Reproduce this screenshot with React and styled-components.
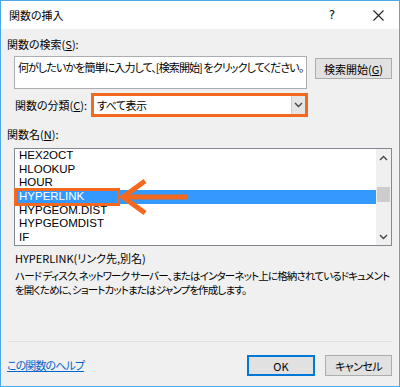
import React from 'react';
import styled, { createGlobalStyle } from 'styled-components';

const GlobalStyle = createGlobalStyle`
  html, body {
    margin: 0;
    padding: 0;
    background: #ffffff;
  }
  * {
    box-sizing: border-box;
  }
`

const ORANGE = '#f4691f';

const Window = styled.div`
  width: 400px;
  height: 387px;
  border: 1px solid #4ea7e6;
  display: flex;
  flex-direction: column;
  font-family: "Noto Sans CJK JP", "Noto Sans", sans-serif;
  font-feature-settings: "palt";
  font-size: 11px;
  color: #000;
  overflow: hidden;
`

const TitleBar = styled.div`
  height: 28px;
  flex: 0 0 28px;
  background: #ffffff;
  display: flex;
  align-items: center;
  padding-left: 8px;
`

const Title = styled.div`
  flex: 1;
  font-size: 11px;
  line-height: 16px;
`

const HelpGlyph = styled.div`
  width: 20px;
  text-align: center;
  font-family: "DejaVu Sans", sans-serif;
  font-size: 12px;
  margin-right: 21px;
`

const CloseBox = styled.div`
  width: 30px;
  display: flex;
  justify-content: center;
  margin-right: 6px;
`

const Body = styled.div`
  flex: 1;
  background: #f0f0f0;
  display: flex;
  flex-direction: column;
  padding: 7px 7px 10px 6px;
`

const Label = styled.div`
  height: 16px;
  line-height: 16px;
  margin-top: ${p => p.$top || 0}px;
  white-space: nowrap;
`

const SearchRow = styled.div`
  display: flex;
  margin-top: 4px;
  margin-left: 7px;
  gap: 8px;
`

const SearchBox = styled.div`
  width: 293px;
  height: 33px;
  background: #fff;
  border: 1px solid #abadb3;
  padding: 2px 3px;
  line-height: 16px;
  letter-spacing: -0.9px;
  white-space: nowrap;
  overflow: hidden;
`

const Button = styled.div`
  width: ${p => p.$w}px;
  height: 21px;
  margin-top: ${p => p.$top || 0}px;
  background: #e1e1e1;
  border: 1px solid ${p => (p.$primary ? '#0078d7' : '#adadad')};
  box-shadow: ${p => (p.$primary ? 'inset 0 0 0 1px #0078d7' : 'none')};
  display: flex;
  align-items: center;
  justify-content: center;
  line-height: 16px;
  letter-spacing: ${p => p.$spacing || 0}px;
  white-space: nowrap;
`

const CategoryRow = styled.div`
  display: flex;
  align-items: center;
  margin-top: 4px;
  padding-left: 8px;
`

const CategoryLabel = styled.div`
  width: 76px;
  line-height: 16px;
  white-space: nowrap;
`

const Select = styled.div`
  width: 217px;
  height: 24px;
  background: #fff;
  border: 3px solid ${ORANGE};
  display: flex;
  align-items: stretch;
`

const SelectValue = styled.div`
  flex: 1;
  padding-left: 3px;
  line-height: 18px;
  letter-spacing: -0.5px;
`

const DropButton = styled.div`
  width: 14px;
  background: #e5e5e5;
  border-left: 1px solid #d0d0d0;
  display: flex;
  align-items: center;
  justify-content: center;
`

const ListWrap = styled.div`
  position: relative;
  margin-top: 6px;
  margin-left: 7px;
  width: 378px;
  height: 98px;
`

const ListBox = styled.div`
  width: 100%;
  height: 100%;
  background: #fff;
  border: 1px solid #828790;
  display: flex;
  overflow: hidden;
`

const Items = styled.div`
  flex: 1;
`

const Item = styled.div`
  height: 13.7px;
  line-height: 13.7px;
  padding-left: 4px;
  font-family: "Liberation Sans", Arial, sans-serif;
  font-size: 11.5px;
  background: ${p => (p.$selected ? '#3399ff' : 'transparent')};
  color: ${p => (p.$selected ? '#fff' : '#000')};
  white-space: nowrap;
`

const ScrollBar = styled.div`
  width: 15px;
  background: #f0f0f0;
  display: flex;
  flex-direction: column;
  align-items: center;
`

const ScrollArrow = styled.div`
  height: 17px;
  display: flex;
  align-items: center;
  justify-content: center;
`

const ScrollTrack = styled.div`
  flex: 1;
  width: 100%;
  padding-top: 21px;
`

const Thumb = styled.div`
  height: 15px;
  margin: 0 1px;
  background: #cdcdcd;
`

const MarkBox = styled.div`
  position: absolute;
  left: 0;
  top: 40px;
  width: 106px;
  height: 18px;
  border: 3px solid ${ORANGE};
  pointer-events: none;
`

const ArrowSvg = styled.svg`
  position: absolute;
  left: 0;
  top: 0;
  overflow: visible;
  pointer-events: none;
`

const Signature = styled.div`
  margin-top: 4px;
  padding-left: 8px;
  line-height: 16px;
`

const Description = styled.div`
  margin-top: 3px;
  padding-left: 8px;
  font-size: 10.5px;
  line-height: 14px;
  letter-spacing: -0.85px;
  white-space: nowrap;
`

const Footer = styled.div`
  margin-top: auto;
  border-top: 1px solid #dfdfdf;
  margin-left: 1px;
  display: flex;
  align-items: flex-start;
  padding-top: 13px;
`

const HelpLink = styled.a`
  color: #0066cc;
  text-decoration: underline;
  line-height: 16px;
  letter-spacing: -0.9px;
  margin-top: 2px;
  margin-left: -1px;
  flex: 1;
`

const FooterButtons = styled.div`
  display: flex;
  gap: 10px;
`

const Chevron = ({ up }) => (
  <svg width="9" height="6" viewBox="0 0 9 6">
    <polyline
      points={up ? '1,5 4.5,1.5 8,5' : '1,1 4.5,4.5 8,1'}
      fill="none"
      stroke="#444"
      strokeWidth="1.4"
    />
  </svg>
);

const functions = ['HEX2OCT', 'HLOOKUP', 'HOUR', 'HYPERLINK', 'HYPGEOM.DIST', 'HYPGEOMDIST', 'IF'];

export default function App() {
  return (
    <>
      <GlobalStyle />
      <Window>
        <TitleBar>
          <Title>関数の挿入</Title>
          <HelpGlyph>?</HelpGlyph>
          <CloseBox>
            <svg width="11" height="11" viewBox="0 0 11 11">
              <path d="M0.5 0.5 L10.5 10.5 M10.5 0.5 L0.5 10.5" stroke="#222" strokeWidth="1.1" />
            </svg>
          </CloseBox>
        </TitleBar>
        <Body>
          <Label>関数の検索(<u>S</u>):</Label>
          <SearchRow>
            <SearchBox>何がしたいかを簡単に入力して、[検索開始] をクリックしてください。</SearchBox>
            <Button $w={77} $top={2}>検索開始(<u>G</u>)</Button>
          </SearchRow>
          <CategoryRow>
            <CategoryLabel>関数の分類(<u>C</u>):</CategoryLabel>
            <Select>
              <SelectValue>すべて表示</SelectValue>
              <DropButton><Chevron /></DropButton>
            </Select>
          </CategoryRow>
          <Label $top={9}>関数名(<u>N</u>):</Label>
          <ListWrap>
            <ListBox>
              <Items>
                {functions.map(f => (
                  <Item key={f} $selected={f === 'HYPERLINK'}>{f}</Item>
                ))}
              </Items>
              <ScrollBar>
                <ScrollArrow><Chevron up /></ScrollArrow>
                <ScrollTrack><Thumb /></ScrollTrack>
                <ScrollArrow><Chevron /></ScrollArrow>
              </ScrollBar>
            </ListBox>
            <MarkBox />
            <ArrowSvg width="378" height="98">
              <line x1="111" y1="49" x2="174" y2="49" stroke={ORANGE} strokeWidth="5" />
              <polyline points="131,33 109,49 131,65" fill="none" stroke={ORANGE} strokeWidth="5" />
            </ArrowSvg>
          </ListWrap>
          <Signature>HYPERLINK(リンク先,別名)</Signature>
          <Description>
            ハード ディスク、ネットワーク サーバー、またはインターネット上に格納されているドキュメント
            <br />
            を開くために、ショートカットまたはジャンプを作成します。
          </Description>
          <Footer>
            <HelpLink>この関数のヘルプ</HelpLink>
            <FooterButtons>
              <Button $w={68} $primary>OK</Button>
              <Button $w={67} $spacing={-0.6}>キャンセル</Button>
            </FooterButtons>
          </Footer>
        </Body>
      </Window>
    </>
  );
}
